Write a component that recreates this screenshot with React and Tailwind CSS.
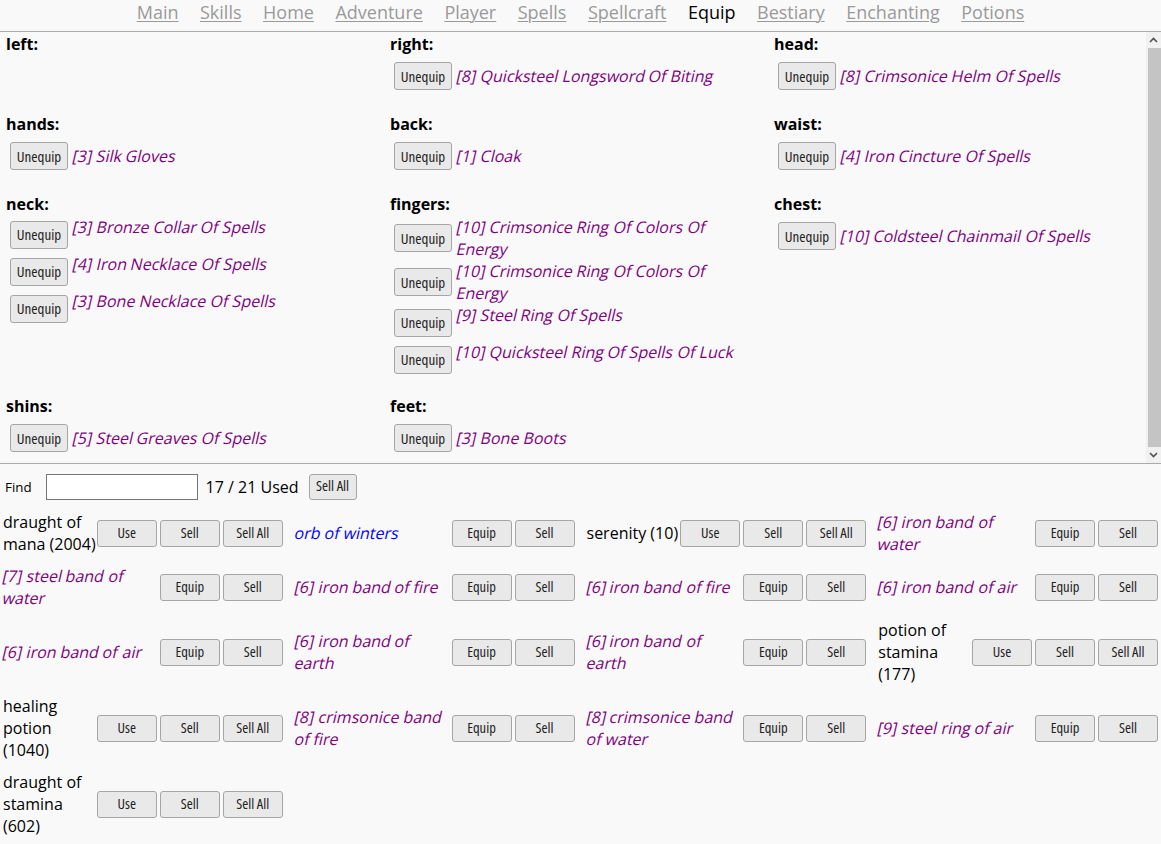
import React from "react";

const navItems = ["Main","Skills","Home","Adventure","Player","Spells","Spellcraft","Equip","Bestiary","Enchanting","Potions"];

const slots = [
  { name: "left", items: [] },
  { name: "right", items: ["[8] Quicksteel Longsword Of Biting"] },
  { name: "head", items: ["[8] Crimsonice Helm Of Spells"] },
  { name: "hands", items: ["[3] Silk Gloves"] },
  { name: "back", items: ["[1] Cloak"] },
  { name: "waist", items: ["[4] Iron Cincture Of Spells"] },
  { name: "neck", items: ["[3] Bronze Collar Of Spells", "[4] Iron Necklace Of Spells", "[3] Bone Necklace Of Spells"] },
  { name: "fingers", items: ["[10] Crimsonice Ring Of Colors Of Energy", "[10] Crimsonice Ring Of Colors Of Energy", "[9] Steel Ring Of Spells", "[10] Quicksteel Ring Of Spells Of Luck"] },
  { name: "chest", items: ["[10] Coldsteel Chainmail Of Spells"] },
  { name: "shins", items: ["[5] Steel Greaves Of Spells"] },
  { name: "feet", items: ["[3] Bone Boots"] },
];

const inv = [
  { t: "draught of mana (2004)", k: "p" },
  { t: "orb of winters", k: "b" },
  { t: "serenity (10)", k: "p" },
  { t: "[6] iron band of water", k: "e" },
  { t: "[7] steel band of water", k: "e" },
  { t: "[6] iron band of fire", k: "e" },
  { t: "[6] iron band of fire", k: "e" },
  { t: "[6] iron band of air", k: "e" },
  { t: "[6] iron band of air", k: "e" },
  { t: "[6] iron band of earth", k: "e" },
  { t: "[6] iron band of earth", k: "e" },
  { t: "potion of stamina (177)", k: "p" },
  { t: "healing potion (1040)", k: "p" },
  { t: "[8] crimsonice band of fire", k: "e" },
  { t: "[8] crimsonice band of water", k: "e" },
  { t: "[9] steel ring of air", k: "e" },
  { t: "draught of stamina (602)", k: "p" },
];

const btnBase =
  "shrink-0 rounded-[3px] border border-[#a5a5a5] bg-[#e9e9e9] text-[#222] leading-none font-['Open_Sans',sans-serif] [font-stretch:75%] flex items-center justify-center";
const btn = btnBase + " text-[14.5px]";

function Oblique({ text }) {
  const words = text.split(" ");
  return (
    <>
      {words.map((w, i) => (
        <React.Fragment key={i}>
          <span className="inline-block -skew-x-[13deg]">{w}</span>
          {i < words.length - 1 ? " " : null}
        </React.Fragment>
      ))}
    </>
  );
}

function Unequip() {
  return <button className={btnBase + " text-[15px] w-[58px] h-[28px]"}>Unequip</button>;
}

function Slot({ slot }) {
  const multi = slot.items.length > 1;
  return (
    <div className="pl-[6px] pr-[20px] mb-4">
      <div className="h-6 leading-6 text-[16px] font-bold text-black">{slot.name}:</div>
      <div className="pl-[4px]">
        {slot.items.map((it, i) =>
          multi ? (
            <div key={i} className="flex min-h-[37px]">
              <div className="self-center"><Unequip /></div>
              <span className="ml-[5px] self-start text-[#800080] text-[16px] leading-[22px]"><Oblique text={it} /></span>
            </div>
          ) : (
            <div key={i} className="flex items-center h-[40px]">
              <Unequip />
              <span className="ml-[5px] text-[#800080] text-[16px] leading-[22px]"><Oblique text={it} /></span>
            </div>
          )
        )}
      </div>
    </div>
  );
}

function InvCell({ item }) {
  const color = item.k === "p" ? "text-black" : item.k === "b" ? "text-[#0000ff]" : "text-[#800080]";
  const buttons = item.k === "p" ? ["Use", "Sell", "Sell All"] : ["Equip", "Sell"];
  return (
    <div className="flex items-center">
      <div className={"flex-1 min-w-0 text-[16px] leading-[22px] " + color}>
        {item.k === "p" ? item.t : <Oblique text={item.t} />}
      </div>
      <div className="flex gap-[3px] shrink-0">
        {buttons.map((b) => (
          <button key={b} className={btn + " w-[60px] h-[27px]"}>{b}</button>
        ))}
      </div>
    </div>
  );
}

function Scrollbar() {
  return (
    <div className="w-[15px] h-[431px] bg-[#f1f1f1] flex flex-col">
      <div className="h-[16px] flex items-center justify-center">
        <svg width="9" height="6" viewBox="0 0 9 6"><path d="M1 5 L4.5 1.5 L8 5" fill="none" stroke="#505050" strokeWidth="1.6" /></svg>
      </div>
      <div className="flex-1 ml-[2px] bg-[#c4c4c4]" />
      <div className="h-[16px] flex items-center justify-center">
        <svg width="9" height="6" viewBox="0 0 9 6"><path d="M1 1 L4.5 4.5 L8 1" fill="none" stroke="#505050" strokeWidth="1.6" /></svg>
      </div>
    </div>
  );
}

export default function App() {
  return (
    <div className="w-[1161px] h-[844px] overflow-hidden bg-[#f9f9f9] font-['Open_Sans',sans-serif] text-black">
      <nav className="h-[32px] border-b border-[#ababab] flex justify-center gap-[21.5px] text-[18px] leading-[24px]">
        {navItems.map((n) =>
          n === "Equip" ? (
            <span key={n} className="text-black">{n}</span>
          ) : (
            <a key={n} className="text-[#999] underline underline-offset-[2px] decoration-[1px]">{n}</a>
          )
        )}
      </nav>
      <div className="border-b border-[#ababab] flex">
        <div className="flex-1 h-[431px] overflow-hidden">
          <div className="grid grid-cols-[384px_384px_1fr]">
            {slots.map((s) => (
              <Slot key={s.name} slot={s} />
            ))}
          </div>
        </div>
        <Scrollbar />
      </div>
      <div className="pt-[9px]">
        <div className="flex items-center h-[27px]">
          <span className="ml-[5px] mt-[3px] text-[13.33px]">Find</span>
          <input className="ml-[14px] w-[152px] h-[26px] border border-[#767676] bg-white outline-none" />
          <span className="ml-[8px] text-[16px]">17 / 21 Used</span>
          <button className={btn + " ml-[10px] w-[48px] h-[26px]"}>Sell All</button>
        </div>
        <div className="mt-[11px] px-[3px] grid grid-cols-4 gap-x-3 gap-y-[10px]">
          {inv.map((it, i) => (
            <InvCell key={i} item={it} />
          ))}
        </div>
      </div>
    </div>
  );
}
